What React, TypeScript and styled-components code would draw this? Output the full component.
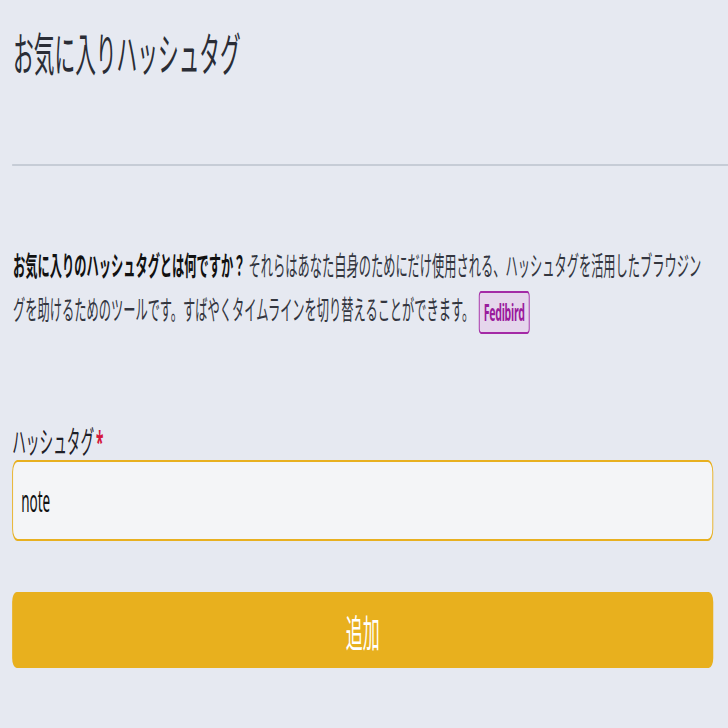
import React from "react"
import styled, { createGlobalStyle } from "styled-components"

// the reference is squeezed horizontally, so the page is laid out
// wider and scaled back on the x axis only
const SCALE_X = 0.45
const VIEW = 728

const GlobalStyle = createGlobalStyle`
  html, body {
    margin: 0;
    padding: 0;
    background: #e6e9f1;
    overflow: hidden;
  }
`

const App = () => (
  <>
    <GlobalStyle />
    <Page>
      <Header>
        <Title>お気に入りハッシュタグ</Title>
      </Header>
      <Hint>
        <strong>お気に入りのハッシュタグとは何ですか？</strong>
        それらはあなた自身のためにだけ使用される、ハッシュタグを活用したブラウジングを助けるためのツールです。すばやくタイムラインを切り替えることができます。
        <Badge>Fedibird</Badge>
      </Hint>
      <Field>
        <Label>
          ハッシュタグ<Required>*</Required>
        </Label>
        <TextInput defaultValue="note" />
      </Field>
      <SubmitButton type="button">追加</SubmitButton>
    </Page>
  </>
)

const Page = styled.div`
  width: ${VIEW / SCALE_X}px;
  box-sizing: border-box;
  padding: 28px 33px 40px 27px;
  transform: scaleX(${SCALE_X});
  transform-origin: 0 0;
  font-family: "Noto Sans", "Noto Sans CJK JP", sans-serif;
  color: #282c37;
`

const Header = styled.header`
  margin-right: -33px;
  padding-bottom: 86px;
  border-bottom: 2px solid #c6ccd6;
`

const Title = styled.h1`
  margin: 0;
  padding-left: 2px;
  font-size: 46px;
  line-height: 50px;
  font-weight: 400;
  color: #2a2d36;
`

const Hint = styled.p`
  max-width: 56.4em;
  margin: 78px 0 0;
  padding-left: 2px;
  font-size: 27.2px;
  line-height: 44px;
  color: #33363f;

  strong {
    font-weight: 700;
    color: #111;
    margin-right: 0.25em;
  }
`

const Badge = styled.span`
  display: inline-block;
  box-sizing: border-box;
  height: 43px;
  margin-left: 10px;
  padding: 0 9px;
  vertical-align: middle;
  border: 2px solid #a42aa6;
  border-radius: 5px;
  background: #e5d6ec;
  color: #9a1a9c;
  font-size: 23.5px;
  letter-spacing: -0.6px;
  font-weight: 700;
  line-height: 39px;
`

const Field = styled.div`
  display: flex;
  flex-direction: column;
  margin-top: 89px;
`

const Label = styled.label`
  font-size: 30.4px;
  line-height: 37px;
  color: #1e2028;
`

const Required = styled.span`
  margin-left: 4px;
  color: #d4173c;
  font-weight: 700;
`

const TextInput = styled.input`
  box-sizing: border-box;
  height: 81px;
  padding: 0 18px;
  border: 2px solid #e8b020;
  border-radius: 12px;
  background: #f4f5f7;
  font-family: "Noto Sans", sans-serif;
  font-size: 30px;
  color: #111;
  outline: none;
`

const SubmitButton = styled.button`
  display: block;
  width: 100%;
  height: 76px;
  margin-top: 51px;
  border: 0;
  border-radius: 10px;
  background: #e8b01e;
  color: #fff;
  font-family: "Noto Sans", "Noto Sans CJK JP", sans-serif;
  font-size: 37.8px;
  cursor: pointer;
`

export default App
